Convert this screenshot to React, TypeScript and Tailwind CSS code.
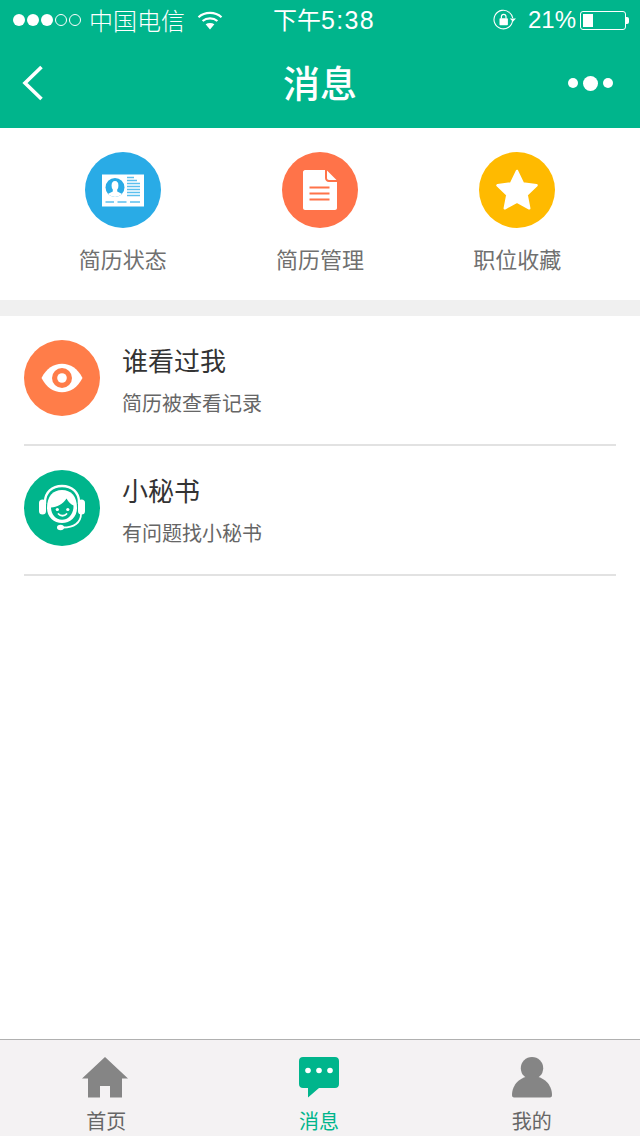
const FONT = 'font-["Noto_Sans_CJK_SC","Noto_Sans",sans-serif]';
const DIGITS = 'font-["Liberation_Sans","Noto_Sans_CJK_SC",sans-serif]';

function SignalDots() {
  return (
    <div className="flex items-center gap-[2px]">
      {[true, true, true, false, false].map((on, i) => (
        <span
          key={i}
          className={on ? 'w-3 h-3 rounded-full bg-white' : 'w-3 h-3 rounded-full border border-white'}
        />
      ))}
    </div>
  );
}

function Wifi() {
  return (
    <svg width="26" height="20" viewBox="0 0 26 20" fill="none">
      <path d="M1.5 7.2C7.8 1.4 18.2 1.4 24.5 7.2" stroke="#fff" strokeWidth="2.2" />
      <path d="M5.6 11C9.7 7.4 16.3 7.4 20.4 11" stroke="#fff" strokeWidth="2.2" />
      <path d="M13 19.5L8.6 14.3C11.2 12.5 14.8 12.5 17.4 14.3Z" fill="#fff" />
    </svg>
  );
}

function RotationLock() {
  return (
    <svg width="24" height="22" viewBox="0 0 24 22" fill="none">
      <path d="M19.6 11.2A9.3 9.3 0 1 1 16.5 3.6" stroke="#fff" strokeWidth="1.1" />
      <path d="M16.5 3.6C18.3 5 19.4 6.8 19.7 9" stroke="#fff" strokeWidth="1.1" />
      <path d="M16.8 9.4H23L19.9 12.8Z" fill="#fff" />
      <rect x="6.5" y="9.2" width="8.4" height="7" rx="0.8" fill="#fff" />
      <path d="M8.4 9.4V7.6A2.3 2.3 0 0 1 13 7.6V9.4" stroke="#fff" strokeWidth="1.2" />
    </svg>
  );
}

function Battery() {
  return (
    <div className="flex items-center">
      <div className="w-[46px] h-[19px] rounded-[3px] border border-white p-[2px]">
        <div className="w-[10px] h-full bg-white" />
      </div>
      <div className="w-[3px] h-[7px] bg-white rounded-r-[2px]" />
    </div>
  );
}

function ResumeCardIcon() {
  return (
    <svg width="42" height="33" viewBox="0 0 42 33">
      <defs>
        <clipPath id="avatar">
          <circle cx="13" cy="13.5" r="9.5" />
        </clipPath>
      </defs>
      <rect width="42" height="32" y="0.5" fill="#fff" />
      <circle cx="13" cy="13.5" r="9.5" fill="#29abe6" />
      <g clipPath="url(#avatar)" fill="#fff">
        <ellipse cx="13" cy="11.5" rx="3.4" ry="4.6" />
        <path d="M10.8 15h4.400v2.500l5 2.500v4H5.800v-4l5-2.500z" />
      </g>
      <path d="M25 3.500h7M25 6.500h10M25 9.500h13M25 12.500h13M25 15.500h13M25 18.500h13M25 21.500h13M3.500 28h8.500M15.500 28h9M28 28h10" stroke="#5cc0ee" strokeWidth="1.600" />
    </svg>
  );
}

function DocIcon() {
  return (
    <svg width="34" height="40" viewBox="0 0 34 40">
      <path d="M2 0H22V8C22 10 23.500 12 26 12H34V38C34 39 33 40 32 40H2C1 40 0 39 0 38V2C0 1 1 0 2 0Z" fill="#fff" />
      <path d="M24 0.500L33.500 10H26C24.800 10 24 9.200 24 8Z" fill="#fff" />
      <path d="M6.500 17.500H26.500M6.500 23.500H26.500M6.500 29.500H26.500" stroke="#ff7349" strokeWidth="2" />
    </svg>
  );
}

function StarIcon() {
  return (
    <svg width="44" height="42" viewBox="0 0 44 42">
      <path
        d="M22 2L28 14.500L41.500 16.300L31.600 25.800L34.200 39.300L22 32.600L9.800 39.300L12.400 25.800L2.500 16.300L16 14.500Z"
        fill="#fff"
        stroke="#fff"
        strokeWidth="2.500"
        strokeLinejoin="round"
      />
    </svg>
  );
}

function EyeIcon() {
  return (
    <svg width="42" height="30" viewBox="0 0 42 30">
      <path d="M0.500 15C5.500 5.500 12.500 0.800 21 0.800S36.500 5.500 41.500 15C36.500 24.500 29.500 29.200 21 29.200S5.500 24.500 0.500 15Z" fill="#fff" />
      <circle cx="21" cy="15" r="10" fill="#ff7d49" />
      <circle cx="21" cy="15" r="4.800" fill="#fff" />
    </svg>
  );
}

function AgentIcon() {
  return (
    <svg width="46" height="48" viewBox="0 0 46 48" fill="none">
      <path d="M6 20V18C6 8.500 13 2 23 2S40 8.500 40 18V20" stroke="#fff" strokeWidth="2.400" />
      <rect x="0" y="15.500" width="7" height="15" rx="3.500" fill="#fff" />
      <rect x="39" y="15.500" width="7" height="15" rx="3.500" fill="#fff" />
      <path d="M8 24C8 12 14 6 23 6S38 12 38 24C38 33 31 39 23 39S8 33 8 24Z" fill="#fff" />
      <path d="M12 23.500C18 23 24 20 27.500 14.500C29.500 18 32 20.500 34.500 21.500C34.800 30 29.500 35.800 23 35.800S12 30 12 23.500Z" fill="#00b58c" />
      <circle cx="18.300" cy="25.500" r="1.600" fill="#fff" />
      <circle cx="28.800" cy="25.500" r="1.600" fill="#fff" />
      <path d="M19.500 30C21.500 32.300 25.500 32.300 27.500 30" stroke="#fff" strokeWidth="1.800" strokeLinecap="round" />
      <path d="M42 30C42 38.500 35 43.500 24 43.500" stroke="#fff" strokeWidth="1.800" />
      <ellipse cx="21.500" cy="43.500" rx="3.500" ry="2.800" fill="#fff" />
    </svg>
  );
}

function HomeIcon() {
  return (
    <svg width="46" height="41" viewBox="0 0 46 41" className="mr-[2px]">
      <path d="M23 0L46 21.500H40V40.500H28V29H18V40.500H6V21.500H0Z" fill="#858585" />
    </svg>
  );
}

function ChatIcon() {
  return (
    <svg width="40" height="41" viewBox="0 0 40 41">
      <path d="M4 0H36C38.500 0 40 1.500 40 4V27C40 29.500 38.500 31 36 31H20L9 40.500V31H4C1.500 31 0 29.500 0 27V4C0 1.500 1.500 0 4 0Z" fill="#00b58c" />
      <circle cx="9" cy="13.500" r="2.800" fill="#fff" />
      <circle cx="20" cy="13.500" r="2.800" fill="#fff" />
      <circle cx="31" cy="13.500" r="2.800" fill="#fff" />
    </svg>
  );
}

function UserIcon() {
  return (
    <svg width="40" height="41" viewBox="0 0 40 41">
      <circle cx="20" cy="11.200" r="11.200" fill="#858585" />
      <path d="M0 38C0 28 8 19 20 19S40 28 40 38C40 39.800 39 40.500 38 40.500H2C1 40.500 0 39.800 0 38Z" fill="#858585" />
    </svg>
  );
}

const shortcuts = [
  { label: '简历状态', bg: 'bg-[#29abe6]', icon: <ResumeCardIcon /> },
  { label: '简历管理', bg: 'bg-[#ff7349]', icon: <DocIcon /> },
  { label: '职位收藏', bg: 'bg-[#ffba00]', icon: <StarIcon /> },
];

const rows = [
  { title: '谁看过我', sub: '简历被查看记录', bg: 'bg-[#ff7d49]', icon: <EyeIcon /> },
  { title: '小秘书', sub: '有问题找小秘书', bg: 'bg-[#00b58c]', icon: <AgentIcon /> },
];

const tabs = [
  { label: '首页', icon: <HomeIcon />, active: false },
  { label: '消息', icon: <ChatIcon />, active: true },
  { label: '我的', icon: <UserIcon />, active: false },
];

export default function App() {
  return (
    <div className={`w-[640px] h-[1136px] bg-white flex flex-col overflow-hidden ${FONT}`}>
      <div className="h-[128px] bg-[#00b58c] text-white shrink-0">
        <div className="h-[40px] flex items-center pl-[13px] pr-[11px]">
          <SignalDots />
          <span className="ml-[8px] text-[24px] leading-none font-light">中国电信</span>
          <span className="ml-[12px]"><Wifi /></span>
          <span className="ml-[50px] text-[24px] leading-none">
            下午<span className={`${DIGITS} text-[25px] tracking-[1.3px]`}>5:38</span>
          </span>
          <span className="ml-auto"><RotationLock /></span>
          <span className={`ml-[11px] text-[24px] leading-none ${DIGITS}`}>21%</span>
          <span className="ml-[4px]"><Battery /></span>
        </div>
        <div className="h-[88px] pb-[2px] flex items-center justify-between pl-[22px] pr-[27px] relative">
          <svg width="22" height="36" viewBox="0 0 22 36" fill="none">
            <path d="M19.500 2L3 18L19.500 34" stroke="#fff" strokeWidth="3.600" />
          </svg>
          <span className="absolute left-0 right-0 -translate-y-px text-center text-[37px] leading-none font-medium">消息</span>
          <div className="flex items-center gap-[5px]">
            <span className="w-[10px] h-[10px] rounded-full bg-white" />
            <span className="w-[15px] h-[15px] rounded-full bg-white" />
            <span className="w-[10px] h-[10px] rounded-full bg-white" />
          </div>
        </div>
      </div>

      <div className="h-[172px] shrink-0 grid grid-cols-3 px-[24px] pt-[24px]">
        {shortcuts.map(s => (
          <div key={s.label} className="flex flex-col items-center">
            <div className={`w-[76px] h-[76px] rounded-full flex items-center justify-center ${s.bg}`}>{s.icon}</div>
            <span className="mt-[14px] text-[22px] leading-[33px] text-[#707070]">{s.label}</span>
          </div>
        ))}
      </div>

      <div className="h-[16px] bg-[#f0f0f0] shrink-0" />

      <div className="flex-1 px-[24px]">
        {rows.map(r => (
          <div key={r.title} className="h-[130px] border-b-2 border-[#e2e2e2] flex items-start pt-[24px]">
            <div className={`w-[76px] h-[76px] rounded-full flex items-center justify-center shrink-0 ${r.bg}`}>{r.icon}</div>
            <div className="ml-[22px]">
              <div className="mt-[1px] text-[26px] leading-[38px] text-[#333333]">{r.title}</div>
              <div className="mt-[9px] text-[20px] leading-[30px] text-[#666666]">{r.sub}</div>
            </div>
          </div>
        ))}
      </div>

      <div className="h-[97px] shrink-0 bg-[#f4f2f3] border-t border-[#b0b0b0] grid grid-cols-3 pt-[17px] pr-[2px]">
        {tabs.map(t => (
          <div key={t.label} className="flex flex-col items-center">
            <div className="h-[41px] flex items-center">{t.icon}</div>
            <span className={`mt-[9px] text-[20px] leading-[27px] ${t.active ? 'text-[#00b58c]' : 'text-[#666666]'}`}>{t.label}</span>
          </div>
        ))}
      </div>
    </div>
  );
}
